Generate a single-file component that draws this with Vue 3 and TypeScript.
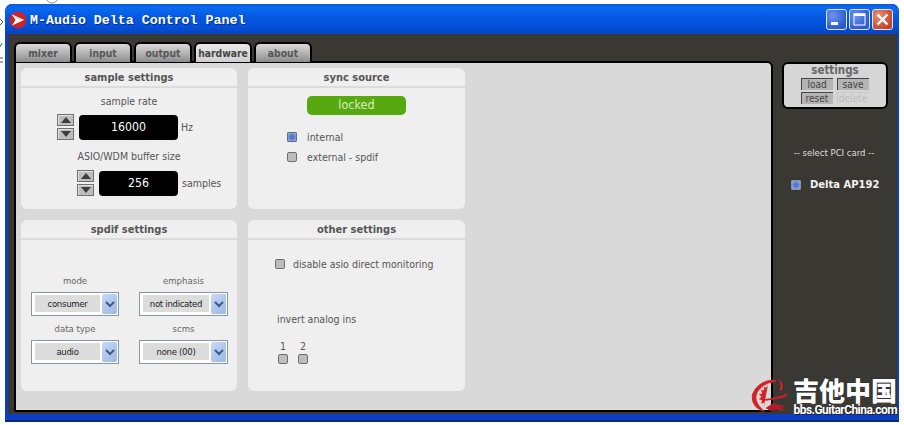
<script setup lang="ts">
const tabs: string[] = ['mixer', 'input', 'output', 'hardware', 'about']
const selects = [
  { label: 'mode', value: 'consumer' },
  { label: 'emphasis', value: 'not indicated' },
  { label: 'data type', value: 'audio' },
  { label: 'scms', value: 'none (00)' },
]
</script>

<template>
  <div class="page">
    <svg class="desktop" width="60" height="70" viewBox="0 0 60 70">
      <circle cx="52" cy="-3" r="6" fill="none" stroke="#8a93a8" stroke-width="1" />
      <path d="M0 19 L3 22 M0 25 L3 22 M2 43 L0 47 M0 58 L3 58 M0 62 L3 62" stroke="#555" stroke-width="1" fill="none" />
    </svg>
    <div class="window">
      <header class="titlebar">
        <svg class="logo" width="18" height="18" viewBox="0 0 18 18">
          <circle cx="9" cy="9" r="8.6" fill="#c8262c" />
          <path d="M3 3.5 L15 9 L3 14.5 L6.5 9 Z" fill="#fff" />
          <path d="M3 3.5 L15 9 L10 9 L5.5 7 Z" fill="#f4dcdc" />
        </svg>
        <span class="title">M-Audio Delta Control Panel</span>
        <div class="controls">
          <button class="wbtn"><svg width="21" height="21" viewBox="0 0 21 21"><rect x="5" y="13" width="7" height="3" fill="#fff" /></svg></button>
          <button class="wbtn"><svg width="21" height="21" viewBox="0 0 21 21"><rect x="5" y="5" width="11" height="11" fill="none" stroke="#fff" stroke-width="1" /><rect x="5" y="4.5" width="11" height="2.5" fill="#fff" /></svg></button>
          <button class="wbtn close"><svg width="21" height="21" viewBox="0 0 21 21"><path d="M5.5 5.5 L15.5 15.5 M15.5 5.5 L5.5 15.5" stroke="#fff" stroke-width="2.4" /></svg></button>
        </div>
      </header>

      <div class="body">
        <div class="main">
          <nav class="tabs">
            <div v-for="t in tabs" :key="t" class="tab" :class="{ active: t === 'hardware' }">{{ t }}</div>
          </nav>
          <div class="panel">
            <section class="card">
              <h3 class="card-title">sample settings</h3>
              <p class="lbl center first">sample rate</p>
              <div class="num-row rate">
                <div class="spin">
                  <button class="sbtn"><i class="up" /></button>
                  <button class="sbtn"><i class="down" /></button>
                </div>
                <div class="display wide">16000</div>
                <span class="lbl">Hz</span>
              </div>
              <p class="lbl center second">ASIO/WDM buffer size</p>
              <div class="num-row buffer">
                <div class="spin">
                  <button class="sbtn"><i class="up" /></button>
                  <button class="sbtn"><i class="down" /></button>
                </div>
                <div class="display narrow">256</div>
                <span class="lbl">samples</span>
              </div>
            </section>

            <section class="card">
              <h3 class="card-title">sync source</h3>
              <div class="pill">locked</div>
              <div class="opts">
                <label class="opt"><i class="cb on" /><span>internal</span></label>
                <label class="opt"><i class="cb" /><span>external - spdif</span></label>
              </div>
            </section>

            <section class="card">
              <h3 class="card-title">spdif settings</h3>
              <div class="sel-grid">
                <div v-for="s in selects" :key="s.label" class="sel-cell">
                  <div class="lbl small">{{ s.label }}</div>
                  <div class="select">
                    <div class="sel-value">{{ s.value }}</div>
                    <div class="sel-arrow">
                      <svg width="10" height="7" viewBox="0 0 10 7"><path d="M1 1 L5 5 L9 1" fill="none" stroke="#3d5a8c" stroke-width="2" /></svg>
                    </div>
                  </div>
                </div>
              </div>
            </section>

            <section class="card">
              <h3 class="card-title">other settings</h3>
              <label class="opt disable"><i class="cb" /><span>disable asio direct monitoring</span></label>
              <p class="lbl invert">invert analog ins</p>
              <div class="inputs">
                <div class="input-col"><span class="lbl">1</span><i class="cb" /></div>
                <div class="input-col"><span class="lbl">2</span><i class="cb" /></div>
              </div>
            </section>
          </div>
        </div>

        <aside class="side">
          <div class="settings">
            <div class="settings-title">settings</div>
            <div class="settings-grid">
              <button class="sb">load</button>
              <button class="sb">save</button>
              <button class="sb">reset</button>
              <button class="sb off">delete</button>
            </div>
          </div>
          <div class="pci-title">-- select PCI card --</div>
          <div class="pci"><i class="cb on dark" /><span>Delta AP192</span></div>
        </aside>
      </div>
    </div>

    <div class="mark">
      <svg class="dragon" width="60" height="48" viewBox="0 0 180 144">
        <path d="M92 24 C62 20 32 38 21 68 C17 94 34 114 62 120 C48 108 36 96 34 78 C34 54 56 34 92 30 Z" fill="#d2232a" />
        <path d="M70 34 L64 46 L56 42 L56 54 L46 52 L50 64 L40 66 L48 74 L40 82 L50 86 L46 96 L56 94 L56 106" fill="#d2232a" stroke="#ecd4d0" stroke-width="2.5" stroke-linejoin="miter" />
        <path d="M100 22 C114 28 118 46 108 58 L104 50 C109 42 106 31 100 22 Z" fill="#d2232a" />
        <path d="M56 82 C76 80 96 76 112 70 L130 62 L120 76 L92 82 L62 86 Z" fill="#c9202a" />
        <path d="M62 108 L84 94 L126 104 L108 106 L122 118 L92 112 L78 118 Z" fill="#b01d27" />
      </svg>
      <div class="cn">吉他中国</div>
      <div class="url">bbs.GuitarChina.com</div>
    </div>
  </div>
</template>

<style>
html, body { margin: 0; background: #fff; }
</style>

<style scoped>
.page {
  position: relative;
  width: 904px;
  height: 425px;
  overflow: hidden;
  background: #fff;
  padding: 4px 5px 3px 5px;
  box-sizing: border-box;
  font-family: "DejaVu Sans Condensed", "DejaVu Sans", sans-serif;
  font-stretch: condensed;
  font-size: 10.5px;
  color: #555;
}
.desktop { position: absolute; left: 0; top: 0; }
.window {
  position: relative;
  height: 100%;
  display: flex;
  flex-direction: column;
  background: #0a3fc4;
  border-radius: 7px 7px 0 0;
  border-bottom: 2px solid #0a2a70;
  padding: 0 2px 6px 3px;
  box-sizing: border-box;
}
.titlebar {
  height: 30px;
  flex: none;
  margin: 0 -2px 0 -3px;
  padding: 2px 6px 0 4px;
  box-sizing: border-box;
  display: flex;
  align-items: center;
  border-radius: 7px 7px 0 0;
  background: linear-gradient(#0a5bdc 0, #0a6af0 12%, #0457e0 45%, #0450d8 75%, #0444c0 100%);
}
.logo { flex: none; }
.title {
  margin-left: 3px;
  color: #fff;
  font: bold 13.3px "Liberation Mono", monospace;
  white-space: nowrap;
  text-shadow: 1px 1px 0 #02307e;
}
.controls { margin-left: auto; display: flex; gap: 2px; margin-top: -1px; }
.wbtn {
  width: 21px;
  height: 21px;
  padding: 0;
  box-sizing: border-box;
  border: 1px solid #dfe8fa;
  border-radius: 3px;
  background: radial-gradient(circle at 30% 30%, #6b93ee, #2f5ed0 70%, #2a55c4);
  display: flex;
  overflow: hidden;
}
.wbtn svg { margin: -1px; flex: none; }
.close { background: radial-gradient(circle at 30% 30%, #e9907a, #c8492c 70%, #b93c22); }

.body {
  flex: 1;
  min-height: 0;
  display: flex;
  background: #3a3833;
  padding: 8px 0 2px 6px;
}
.main { width: 759px; flex: none; display: flex; flex-direction: column; }
.tabs { display: flex; gap: 2px; height: 20px; position: relative; z-index: 1; }
.tab {
  width: 58px;
  height: 20px;
  box-sizing: border-box;
  border: 2px solid #000;
  border-bottom: 0;
  border-radius: 6px 6px 0 0;
  background: linear-gradient(#d8d8d8, #b0b0b0 55%, #8c8c8c);
  font-weight: bold;
  font-size: 10.3px;
  color: #555;
  text-align: center;
  line-height: 18px;
}
.tab.active { background: linear-gradient(#e8e8e8, #cfcfcf); color: #444; }
.panel {
  flex: 1;
  min-height: 0;
  box-sizing: border-box;
  margin-top: -1px;
  background: #d9d9d9;
  border: 2px solid #000;
  border-radius: 0 6px 2px 2px;
  padding: 5px 0 0 5px;
  display: grid;
  grid-template-columns: 216px 217px;
  grid-template-rows: 141px 171px;
  gap: 11px;
}
.card { background: #efefef; border-radius: 6px; overflow: hidden; }
.card-title {
  margin: 0;
  height: 20px;
  box-sizing: border-box;
  border-bottom: 2px solid #dcdcdc;
  text-align: center;
  font-size: 11px;
  font-weight: bold;
  line-height: 20px;
  color: #555;
}
.lbl { margin: 0; color: #555; font-size: 10.5px; line-height: 12px; white-space: nowrap; }
.center { text-align: center; }
.first { margin-top: 7px; }
.second { margin-top: 10px; }
.num-row { display: flex; align-items: center; }
.rate { margin-top: 7px; padding-left: 36px; }
.buffer { margin-top: 8px; padding-left: 56px; }
.buffer .lbl { margin-left: 4px; }
.rate .lbl { margin-left: 3px; }
.spin { display: flex; flex-direction: column; gap: 2px; margin-right: 5px; }
.sbtn {
  width: 17px;
  height: 12px;
  box-sizing: border-box;
  padding: 0;
  background: #bdbdbd;
  border: 1px solid #6f6f6f;
  box-shadow: inset 1px 1px 0 #e2e2e2;
  display: flex;
  align-items: center;
  justify-content: center;
}
.up, .down { display: block; width: 0; height: 0; border-left: 5px solid transparent; border-right: 5px solid transparent; }
.up { border-bottom: 6px solid #3d3d3d; }
.down { border-top: 6px solid #3d3d3d; }
.display {
  height: 25px;
  background: #000;
  color: #fff;
  border-radius: 4px;
  text-align: center;
  line-height: 24px;
  font-size: 12.2px;
}
.wide { width: 99px; }
.narrow { width: 79px; }
.pill {
  width: 99px;
  height: 19px;
  margin: 8px auto 0;
  background: #56a90e;
  border-radius: 5px;
  color: #d8efc4;
  text-align: center;
  line-height: 18px;
  font-size: 12.5px;
}
.opts { margin: 17px 0 0 39px; display: flex; flex-direction: column; gap: 10px; }
.opt { display: flex; align-items: center; height: 10px; gap: 10px; color: #555; font-size: 10.5px; white-space: nowrap; }
.cb {
  display: block;
  flex: none;
  width: 10px;
  height: 10px;
  box-sizing: border-box;
  border: 1px solid #6e6e6e;
  border-radius: 2px;
  background: #bdbdbd;
}
.cb.on {
  background: radial-gradient(circle, #4f74e6 0, #4f74e6 30%, #93a3c4 75%);
  border-color: #5f6f8c;
  border-radius: 1px;
}
.cb.dark { border-color: #8493ad; }
.sel-grid {
  margin: 35px 0 0 10px;
  display: grid;
  grid-template-columns: 88px 89px;
  column-gap: 20px;
  row-gap: 7px;
}
.sel-cell { text-align: center; }
.small { font-size: 9.5px; line-height: 12px; margin-bottom: 5px; color: #666; }
.select {
  height: 24px;
  box-sizing: border-box;
  border: 1px solid #8797a8;
  background: #fff;
  padding: 1px;
  display: flex;
  gap: 2px;
}
.sel-value {
  flex: 1;
  margin: 1px 0 2px 2px;
  background: #dcdcdc;
  color: #222;
  font-size: 9.5px;
  letter-spacing: -0.3px;
  line-height: 18px;
  text-align: center;
  white-space: nowrap;
}
.sel-arrow {
  flex: none;
  width: 15px;
  background: linear-gradient(135deg, #c8d8f6, #9db6e4);
  border-radius: 2px;
  display: flex;
  align-items: center;
  justify-content: center;
}
.disable { margin: 19px 0 0 27px; gap: 8px; }
.invert { margin: 44px 0 0 29px; }
.inputs { margin: 15px 0 0 30px; display: flex; gap: 10px; }
.input-col { display: flex; flex-direction: column; align-items: center; gap: 2px; }

.side { flex: 1; display: flex; flex-direction: column; padding: 20px 0 0 9px; }
.settings {
  width: 106px;
  height: 47px;
  box-sizing: border-box;
  background: #d6d6d6;
  border: 2px solid #000;
  border-radius: 6px;
  text-align: center;
}
.settings-title { font-weight: bold; font-size: 11.5px; line-height: 13px; color: #666; margin-bottom: 1px; }
.settings-grid {
  display: grid;
  grid-template-columns: 32px 32px;
  grid-auto-rows: 12px;
  gap: 2px 4px;
  justify-content: center;
  padding-right: 1px;
}
.sb {
  padding: 0;
  box-sizing: border-box;
  background: #b4b4b4;
  border: 0;
  border-top: 1px solid #444;
  border-left: 1px solid #444;
  font: 10px "DejaVu Sans Condensed", "DejaVu Sans", sans-serif;
  font-stretch: condensed;
  line-height: 10px;
  color: #444;
}
.sb.off { background: #d6d6d6; border-color: #c8c8c8; color: #bdbdbd; }
.pci-title { margin-top: 38px; text-align: center; width: 104px; color: #dedede; font: 8.5px/12px "DejaVu Sans", sans-serif; white-space: nowrap; }
.pci { margin: 20px 0 0 9px; display: flex; align-items: center; gap: 9px; color: #f2f2f2; font: bold 10px "DejaVu Sans", sans-serif; }

.mark { position: absolute; left: 745px; top: 372px; width: 152px; height: 47px; pointer-events: none; }
.dragon { position: absolute; left: 0; top: 0; }
.cn {
  position: absolute;
  right: 0;
  top: 5px;
  font: 900 26px/26px "Noto Sans CJK SC", sans-serif;
  color: #fff;
  text-shadow: 1px 1px 0 #333, -1px 0 0 #333, 0 -1px 0 #333, 0 2px 0 #444;
  white-space: nowrap;
}
.url {
  position: absolute;
  right: 0;
  top: 32px;
  font: bold 12px/13px "Roboto", sans-serif;
  letter-spacing: -0.55px;
  color: #fff;
  text-shadow: 1px 1px 0 #222;
  white-space: nowrap;
}
</style>
